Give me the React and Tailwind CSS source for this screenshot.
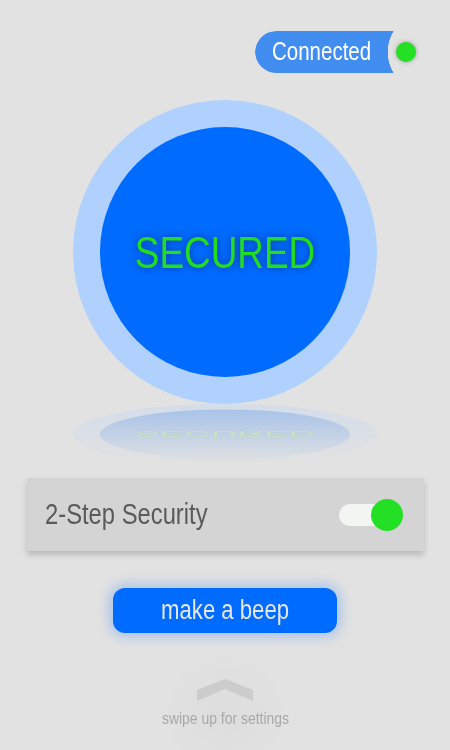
import React from "react";

function Orb() {
  return (
    <div className="w-[304px] h-[304px] rounded-full bg-[#b0d1fd] flex items-center justify-center">
      <div className="w-[250px] h-[250px] rounded-full bg-[#006bff] flex items-center justify-center">
        <span className="inline-block scale-x-[0.82] text-[45px] leading-none text-[#22dd22] [text-shadow:0_0_8px_rgba(0,30,100,0.7)]">
          SECURED
        </span>
      </div>
    </div>
  );
}

export default function App() {
  return (
    <div className="w-[450px] h-[750px] overflow-hidden bg-[#e2e2e2] flex flex-col items-center font-['Liberation_Sans_Narrow','Arial_Narrow','Liberation_Sans',sans-serif]">
      <div className="w-full flex justify-end items-center pt-[31px] pr-[34px] gap-px">
        <div className="w-[140px] h-[42px] rounded-l-full bg-[#428ef0] flex items-center pl-[17px] pb-[2px] text-white text-[25px] leading-none [mask-image:radial-gradient(circle_at_calc(100%_+_33px)_50%,transparent_40px,black_40.5px)]">
          <span className="inline-block origin-left scale-x-[0.82] whitespace-nowrap">Connected</span>
        </div>
        <div className="w-5 h-5 rounded-full bg-[#24e024] shadow-[0_0_4px_rgba(0,0,0,0.35)]" />
      </div>

      <div className="mt-[27px]">
        <Orb />
      </div>

      <div className="w-[304px] h-[60px] [mask-image:linear-gradient(to_bottom,rgba(0,0,0,0.28),rgba(0,0,0,0))]">
        <div className="origin-top [transform:translateY(60.8px)_scaleY(-0.2)]">
          <Orb />
        </div>
      </div>

      <div className="mt-[14px] w-[397px] h-[73px] bg-[#d4d4d4] shadow-[0_4px_6px_rgba(0,0,0,0.18)] flex items-center justify-between pl-[18px] pr-[21px]">
        <span className="inline-block origin-left scale-x-[0.82] whitespace-nowrap text-[29px] leading-none text-[#5a5a5a]">2-Step Security</span>
        <div className="relative w-[64px] h-[32px] flex items-center">
          <div className="w-[56px] h-[22px] rounded-full bg-[#f3f5f3]" />
          <div className="absolute right-0 top-0 w-8 h-8 rounded-full bg-[#24e024]" />
        </div>
      </div>

      <button className="mt-[37px] w-[224px] h-[45px] rounded-[12px] bg-[#006bff] text-[#e6e6e6] text-[27px] leading-none shadow-[0_0_12px_4px_rgba(0,107,255,0.25)] flex items-center justify-center">
        <span className="inline-block scale-x-[0.82] whitespace-nowrap">make a beep</span>
      </button>

      <div className="relative mt-[46px] flex flex-col items-center">
        <div className="absolute left-1/2 top-[-30px] -translate-x-1/2 w-[130px] h-[130px] rounded-full bg-[radial-gradient(circle,rgba(0,0,0,0.025),rgba(0,0,0,0)_70%)]" />
        <svg width="56" height="22" viewBox="0 0 56 22" className="relative">
          <polygon points="0,11 28,0 56,11 56,22 28,10 0,22" fill="#cccccc" />
        </svg>
        <span className="relative mt-[9px] inline-block scale-x-[0.82] whitespace-nowrap text-[17px] leading-[18px] text-[#a9a9a9]">swipe up for settings</span>
      </div>
    </div>
  );
}
